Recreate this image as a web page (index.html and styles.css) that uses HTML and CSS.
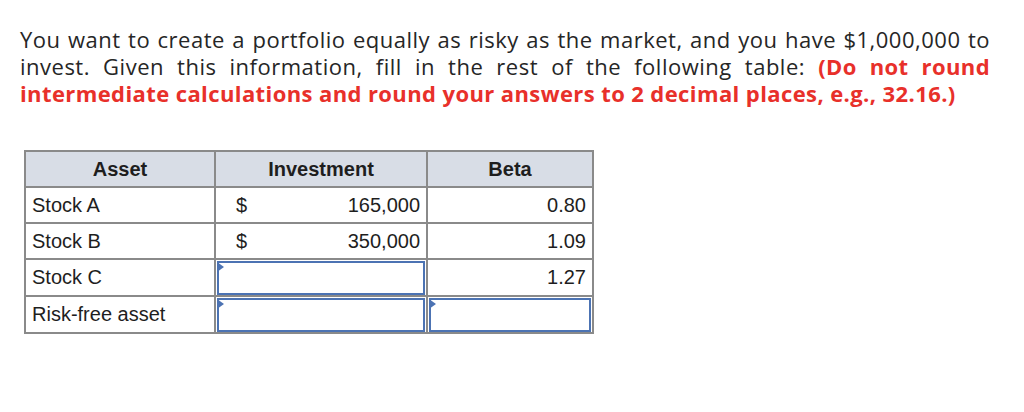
FILE: index.html
```html
<!DOCTYPE html>
<html>
<head>
<meta charset="utf-8">
<link rel="stylesheet" href="styles.css">
</head>
<body>
<div class="page">
  <p class="question">You want to create a portfolio equally as risky as the market, and you have $1,000,000 to invest. Given this information, fill in the rest of the following table: <strong class="note">(Do not round intermediate calculations and round your answers to 2 decimal places, e.g., 32.16.)</strong></p>
  <table class="grid">
    <thead>
      <tr><th class="c-asset">Asset</th><th class="c-inv">Investment</th><th class="c-beta">Beta</th></tr>
    </thead>
    <tbody>
      <tr><td>Stock A</td><td><div class="money"><span>$</span><span>165,000</span></div></td><td class="num">0.80</td></tr>
      <tr><td>Stock B</td><td><div class="money"><span>$</span><span>350,000</span></div></td><td class="num">1.09</td></tr>
      <tr><td>Stock C</td><td class="in"><div class="box"></div></td><td class="num">1.27</td></tr>
      <tr><td>Risk-free asset</td><td class="in"><div class="box"></div></td><td class="in"><div class="box"></div></td></tr>
    </tbody>
  </table>
</div>
</body>
</html>
```

FILE: styles.css
```css
html, body {
  margin: 0;
  padding: 0;
  background: #ffffff;
}
.page {
  padding: 26px 0 0 20px;
}
.question {
  margin: 0;
  width: 970px;
  font-family: "Open Sans", "Noto Sans", sans-serif;
  font-size: 22px;
  line-height: 27px;
  letter-spacing: 0.5px;
  color: #262626;
  text-align: justify;
}
.note {
  color: #e8302a;
  font-weight: 700;
  letter-spacing: 0.4px;
}
.grid {
  margin: 43px 0 0 4px;
  border-collapse: collapse;
  border: 2px solid #8a8a8a;
  font-family: "Liberation Sans", Arial, sans-serif;
  font-size: 20px;
  color: #1e1e1e;
}
.grid tr {
  height: 36px;
}
.grid th, .grid td {
  border: 2px solid #8a8a8a;
  padding: 0 6px;
}
.grid th {
  background: #d8dde6;
  font-weight: 700;
  text-align: center;
}
.c-asset { width: 176px; }
.c-inv { width: 198px; }
.c-beta { width: 152px; }
.num { text-align: right; }
.money {
  display: flex;
  justify-content: space-between;
  padding-left: 14px;
}
.grid td.in {
  padding: 0;
}
.box {
  height: 30px;
  margin: 1px 1px 0 1px;
  border: 2px solid #4c73b3;
  position: relative;
  background: #fff;
}
.box::before {
  content: "";
  position: absolute;
  left: -2px;
  top: -1px;
  border-left: 7px solid #4c73b3;
  border-top: 5px solid transparent;
  border-bottom: 5px solid transparent;
}
```
